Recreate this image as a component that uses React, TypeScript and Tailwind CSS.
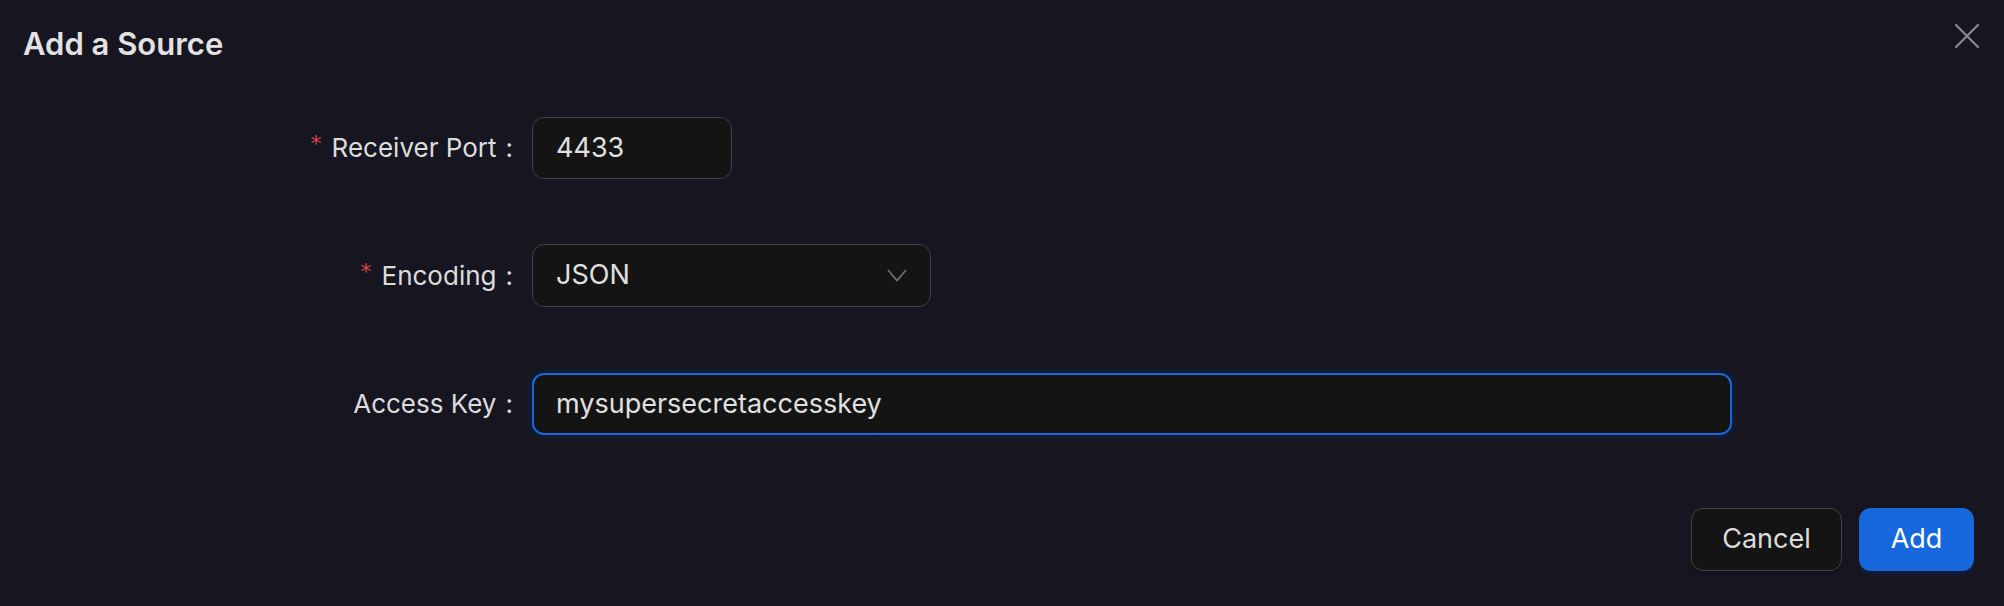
import React from "react";

const font = { fontFamily: "Inter, 'Noto Sans', sans-serif" };

function Label({ text, required }: { text: string; required?: boolean }) {
  return (
    <div className="w-[532px] shrink-0 flex justify-end items-center pr-[19px] text-[26px] leading-[40px] text-[#dcdcdd]">
      {required && (
        <span className="text-[#dc4446] text-[22px] leading-none mr-[10px] -mt-[8px]" style={{ fontFamily: "'DejaVu Sans', sans-serif" }}>
          *
        </span>
      )}
      <span>{text}</span>
      <span className="ml-[9px]">:</span>
    </div>
  );
}

export default function App() {
  return (
    <div className="w-[2004px] h-[606px] bg-[#171620] relative flex flex-col" style={font}>
      <div className="pt-[24px] pl-[23px] h-[64px] text-[31px] leading-[40px] font-semibold text-[#e2e2e3]">
        Add a Source
      </div>
      <button className="absolute right-[25px] top-[24px] w-[24px] h-[24px] text-[#8a8a8e]">
        <svg viewBox="0 0 24 24" width="24" height="24" fill="none" stroke="currentColor" strokeWidth="2.2" strokeLinecap="round">
          <path d="M1 1 L23 23 M23 1 L1 23" />
        </svg>
      </button>

      <div className="mt-[53px] flex flex-col">
        <div className="flex items-center h-[62px]">
          <Label text="Receiver Port" required />
          <div className="w-[200px] h-[62px] rounded-[12px] border-[1.5px] border-[#424242] bg-[#141414] flex items-center pl-[23px] text-[27px] text-[#e0e0e0]">
            4433
          </div>
        </div>

        <div className="flex items-center h-[63px] mt-[65px]">
          <Label text="Encoding" required />
          <div className="w-[399px] h-[63px] rounded-[12px] border-[1.5px] border-[#424242] bg-[#141414] flex items-center justify-between pl-[23px] pr-[23px] text-[27px] text-[#e0e0e0]">
            <span>JSON</span>
            <svg width="20" height="13" viewBox="0 0 20 13" fill="none" stroke="#6e6e70" strokeWidth="1.8">
              <path d="M1 1 L10 11.5 L19 1" />
            </svg>
          </div>
        </div>

        <div className="flex items-center h-[62px] mt-[66px]">
          <Label text="Access Key" />
          <div className="w-[1200px] h-[62px] rounded-[12px] border-[2px] border-[#1668dc] bg-[#141414] shadow-[0_0_0_4px_#111a2e] flex items-center pl-[22px] text-[27px] text-[#e0e0e0]">
            mysupersecretaccesskey
          </div>
        </div>
      </div>

      <div className="mt-[73px] flex justify-end gap-[17px] pr-[30px]">
        <button className="w-[151px] h-[63px] rounded-[12px] border-[1.5px] border-[#424242] bg-[#141414] text-[27px] text-[#dcdcdd] shadow-[0_4px_0_rgba(0,0,0,0.18)]">
          Cancel
        </button>
        <button className="w-[115px] h-[63px] rounded-[12px] bg-[#1668dc] text-[27px] text-white shadow-[0_4px_0_#131a3a]">
          Add
        </button>
      </div>
    </div>
  );
}
